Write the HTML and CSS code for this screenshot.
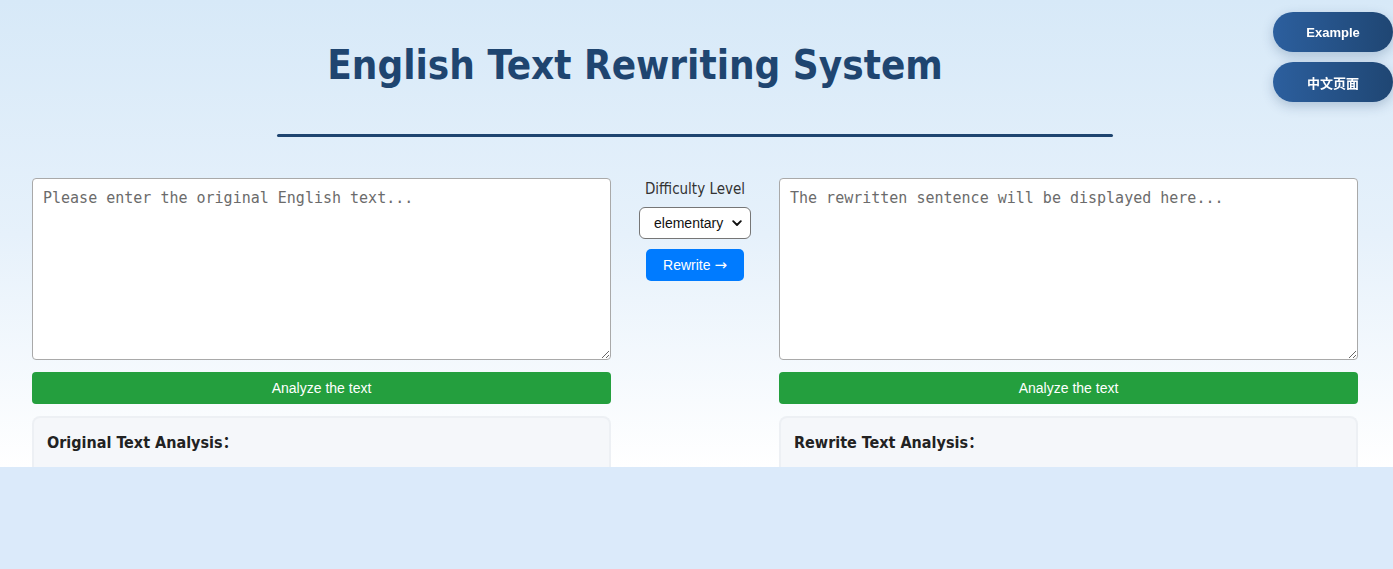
FILE: index.html
```html
<!DOCTYPE html>
<html lang="en">
<head>
<meta charset="utf-8">
<title>English Text Rewriting System</title>
<link rel="stylesheet" href="styles.css">
</head>
<body>
<div class="page">
  <header class="header">
    <h1 class="title">English Text Rewriting System</h1>
    <div class="rule"></div>
  </header>
  <main class="workspace">
    <section class="col">
      <textarea class="text-box" placeholder="Please enter the original English text..."></textarea>
      <button class="analyze-btn">Analyze the text</button>
      <div class="analysis"><h3 class="analysis-title">Original Text Analysis：</h3></div>
    </section>
    <div class="mid">
      <label class="mid-label">Difficulty Level</label>
      <div class="select-wrap">
        <select class="level-select">
          <option>elementary</option>
          <option>intermediate</option>
          <option>advanced</option>
        </select>
        <svg class="chev" width="10" height="7" viewBox="0 0 10 7"><path d="M1.2 1.2 L5 5 L8.8 1.2" fill="none" stroke="#111" stroke-width="1.9" stroke-linecap="round" stroke-linejoin="round"/></svg>
      </div>
      <button class="rewrite-btn">Rewrite <span class="arrow">→</span></button>
    </div>
    <section class="col">
      <textarea class="text-box" placeholder="The rewritten sentence will be displayed here..." readonly></textarea>
      <button class="analyze-btn">Analyze the text</button>
      <div class="analysis"><h3 class="analysis-title">Rewrite Text Analysis：</h3></div>
    </section>
  </main>
</div>
<nav class="float-nav">
  <button class="pill-btn">Example</button>
  <button class="pill-btn">中文页面</button>
</nav>
</body>
</html>
```
FILE: styles.css
```css
html {
  background: #dbeafa;
}
body {
  margin: 0;
  font-family: "DejaVu Sans Condensed", "DejaVu Sans", "Noto Sans CJK SC", sans-serif;
}
.page {
  background: linear-gradient(to bottom, #d7e9f8 0%, #e6f1fb 50%, #ffffff 100%);
  padding: 0 35px 0 32px;
}
.header {
  padding-top: 41px;
  display: flex;
  flex-direction: column;
  align-items: center;
}
.title {
  margin: 0 120px 0 0;
  font-size: 40px;
  line-height: 48px;
  font-weight: bold;
  color: #1f4570;
}
.rule {
  width: 60vw;
  height: 3px;
  background: #1e4570;
  margin-top: 45px;
  border-radius: 2px;
}
.workspace {
  display: grid;
  grid-template-columns: 1fr 112px 1fr;
  column-gap: 28px;
  margin-top: 41px;
}
.col {
  display: flex;
  flex-direction: column;
  gap: 12px;
}
.text-box {
  box-sizing: border-box;
  height: 182px;
  width: 100%;
  resize: vertical;
  border: 1px solid #a9a9a9;
  border-radius: 4px;
  padding: 10px 10px 8px;
  font-family: "DejaVu Sans Mono", monospace;
  font-size: 15px;
  background: #fff;
  margin: 0;
}
.text-box::placeholder {
  color: #6b6b6b;
}
.analyze-btn {
  height: 32px;
  border: none;
  border-radius: 4px;
  background: #249f3e;
  color: #fff;
  font-family: "Liberation Sans", Arial, sans-serif;
  font-size: 14px;
}
.analysis {
  box-sizing: border-box;
  height: 51px;
  background: #f5f7fa;
  border: 2px solid #edf0f4;
  border-bottom: none;
  border-radius: 8px 8px 0 0;
  padding: 14px 13px 0;
}
.analysis-title {
  margin: 0;
  font-family: "DejaVu Sans Condensed", "Noto Sans CJK SC", sans-serif;
  font-size: 16px;
  line-height: 22px;
  font-weight: bold;
  color: #222;
}
.mid {
  display: flex;
  flex-direction: column;
  align-items: center;
}
.mid-label {
  font-size: 15px;
  line-height: 20px;
  padding-top: 1px;
  color: #333;
}
.select-wrap {
  position: relative;
  margin-top: 8px;
}
.level-select {
  appearance: none;
  -webkit-appearance: none;
  box-sizing: border-box;
  width: 112px;
  height: 32px;
  border: 1px solid #767676;
  border-radius: 6px;
  background: #fff;
  padding: 0 0 0 14px;
  font-family: "Liberation Sans", Arial, sans-serif;
  font-size: 14px;
  color: #111;
}
.chev {
  position: absolute;
  right: 9px;
  top: 13px;
  pointer-events: none;
}
.rewrite-btn {
  margin-top: 10px;
  width: 98px;
  height: 32px;
  border: none;
  border-radius: 5px;
  background: #007bff;
  color: #fff;
  font-family: "Liberation Sans", Arial, sans-serif;
  font-size: 14px;
}
.arrow {
  font-family: "DejaVu Sans", sans-serif;
  font-size: 15px;
}
.float-nav {
  position: fixed;
  top: 12px;
  right: 0;
  display: flex;
  flex-direction: column;
  gap: 10px;
}
.pill-btn {
  width: 120px;
  height: 40px;
  border: none;
  border-radius: 20px;
  background: linear-gradient(90deg, #2c5f9e, #1f4673);
  color: #fff;
  font-family: "Liberation Sans", "Noto Sans CJK SC", Arial, sans-serif;
  font-weight: bold;
  font-size: 13px;
  box-shadow: 0 4px 12px rgba(30, 69, 112, 0.25);
}
```
